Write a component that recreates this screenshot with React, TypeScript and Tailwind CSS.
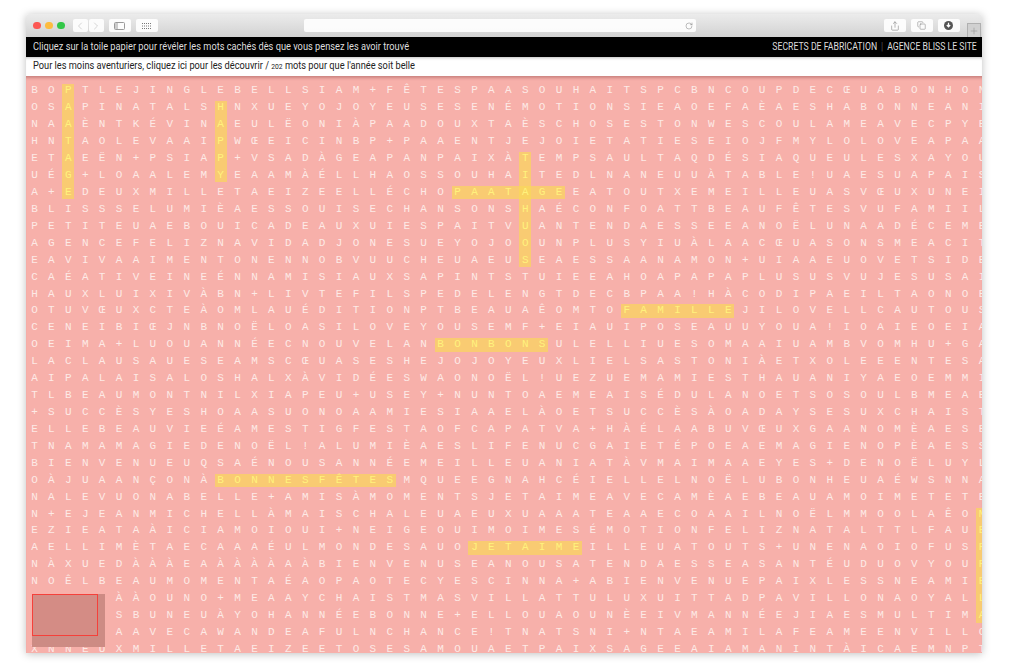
import { ChevronLeft, ChevronRight, Copy, Plus, RotateCw, Share } from "lucide-react";

const rows = [
  "BOPTLEJINGLEBELLSIAM+FÊTESPAASOUHAITSPCBNCOUPDECŒUABONHON",
  "OSAPINATALSHNXUEYOJOYEUSESENÉMOTIONSIEAOEFAÈAESHABONNEANI",
  "NAAÈNTKÉVINAEULËONIÀPAADOUXTAÈSCHOSESTONWESCOULAMEAVECPYE",
  "HNTAOLEVAAIPWŒEICINBP+PAAENTJEJOIETATIESEIOJFMYLOLOVEAPAA",
  "ETAEËN+PSIAP+VSADÀGEAPANPAIXÀTEMPSAULTAQDÉSIAQUEULESXAYOU",
  "UÉG+LOAALEMYEAAMÀÉLLHAOSSOUHAITEDLNANEUUÀTABLE!UAESUAPAIS",
  "A+EDEUXMILLETAEIZEELLÉCHOPAATAGEEATOUTXEMEILLEUASVŒUXUNEI",
  "BLISSSELUMIÈAESSOUISECHANSONSHAÉCONFOATTBEAUFÊTESVUFAMIIL",
  "PETITEUAEBOUICADEAUXUIESPAITVUANTENDAESSEEANOËLUNAADÉCEMB",
  "AGENCEFELIZNAVIDADJONESUEYOJOOUNPLUSYIUÀLAACŒUASONSMEACIT",
  "EAVIVAAIMENTONENNOBVUUCHEUAEUSEAESSAANAMON+UIAAEUOVETSIDE",
  "CAÉATIVEINEÉNNAMISIAUXSAPINTSTUIEEAHOAPAPAPLUSUSVUJESUSAI",
  "HAUXLUIXIVÀBN+LIVTEFILSPEDELENGTDECBPAA!HÀCODIPAEILTAONOE",
  "OTUVŒUXCTEÀOMLAUÉDITIONPTBEAUAÊOMTOFAMILLEJILOVELLCAUTOUS",
  "CENEIBIŒJNBNOËLOASILOVEYOUSEMF+EIAUIPOSEAUUYOUA!IOAIEOEIA",
  "OEIMA+LUOUANNÉECNOUVELANBONBONSULELLIUESOMAAIUAMBVOMHU+GA",
  "LACLAUSAUESEAMSCŒUASESHEJOJOYEUXLIELSASTONIÀETXOLEEENTESA",
  "AIPALAISALOSHALXÀVIDÉESWAONOËL!UEZUEMAMIESTHAUANIYAEOEMMI",
  "TLBEAUMONTNILXIAPEU+USEY+NUNTOAEMEAISÉDULANOETSOSOULBMEAE",
  "+SUCCÈSYESHOAASUONOAAMIESIAAELÀOETSUCCÈSÀOADAYSESUXCHAIST",
  "ELLEBEAUVIEÉAMESTIGFESTAOFCAPATVA+HÀÉLAABUVŒUXGAANOMÈAESE",
  "TNAMAMAGIEDENOËL!ALUMIÈAESLIFENUCGAIETÉPOEAEMAGIENOPÈAESS",
  "BIENVENUEUQSAÉNOUSANNÉEMEILLEUANIATÀVMAIMAAEYES+DENOËLUYL",
  "OÀJUAANÇONÀBONNESFÊTESMQUEEGNAHCÉIELLELNOËLUBONHEUAÉWSNNA",
  "NALEVUONABELLE+AMISÀMOMENTSJETAIMEAVECAMÈAEBEAUAMOIMETETE",
  "N+EJEANMICHELLÀMAISCHALEUAEUXUAAATEAAECOAAILNOËLMMOOLAÊOM",
  "EZIEATAÀICIAMOIOUI+NEIGEOUIMOIMESÉMOTIONFELIZNATALTTLFAUE",
  "AELLIMÈTAECAAAÉULMONDESAUOJETAIMEILLEUATOUTS+UNENAOIOFUSR",
  "NÀXUEDÀÀÀEAÀÀÀÀAÀBIENVENUSEANOUSATENDAESSEASANTÉUDUOVYOUR",
  "NOÊLBEAUMOMENTAÉAOPAOTECYESCINNA+ABIENVENUEPAIXLESSNEAMIE",
  "     ÀÀOUNO+MEAAYCHAISTMASVILLATTULUXUITTADPAVILLONAOYALL",
  "     SBUNEUÀYOHANNÉEBONNE+ELLOUAOUNÈEIVMANNÉEJIAESMULTIMA",
  "     AAVECAWANDEAFULNCHANCE!TNATSNI+NTAEAMILAFEAMEENVILLO",
  "XNNEUXMILLETAEIZEETOSESAMOUAETPAIXSAGEEAIAMANINTÀICAEMNPT",
];

const PITCH = 16.93;

// found words: [col, row, length, vertical]
const words: [number, number, number, boolean][] = [
  [2, 0, 7, true],
  [11, 1, 5, true],
  [29, 4, 7, true],
  [25, 6, 7, false],
  [35, 13, 7, false],
  [24, 15, 7, false],
  [11, 23, 11, false],
  [26, 27, 7, false],
  [56, 25, 7, true],
];

const found = new Set<string>();
words.forEach(([col, row, len, vertical]) => {
  for (let i = 0; i < len; i++) {
    found.add(vertical ? `${row + i}-${col}` : `${row}-${col + i}`);
  }
});

function ToolButton({ className, children }: { className: string; children?: React.ReactNode }) {
  return (
    <div className={`flex h-[13px] items-center justify-center rounded-[2px] bg-white/90 text-[#777] ${className}`}>
      {children}
    </div>
  );
}

function Toolbar() {
  return (
    <div className="relative flex h-[23px] shrink-0 items-center bg-gradient-to-b from-[#ececec] to-[#d2d2d2] pl-[7px] pr-[22px]">
      <div className="flex gap-[4.5px]">
        <span className="h-[7.5px] w-[7.5px] rounded-full bg-[#fc5753]" />
        <span className="h-[7.5px] w-[7.5px] rounded-full bg-[#fdbc40]" />
        <span className="h-[7.5px] w-[7.5px] rounded-full bg-[#33c748]" />
      </div>
      <div className="ml-[8px] flex gap-px">
        <ToolButton className="w-[15px] text-[#bbb]">
          <ChevronLeft size={12} strokeWidth={1.2} />
        </ToolButton>
        <ToolButton className="w-[15px] text-[#bbb]">
          <ChevronRight size={12} strokeWidth={1.2} />
        </ToolButton>
      </div>
      <ToolButton className="ml-[5px] w-[22px]">
        <svg width="11" height="8" viewBox="0 0 11 8" fill="none">
          <rect x="0.5" y="0.5" width="10" height="7" rx="1" stroke="#999" />
          <rect x="1" y="1" width="3" height="6" fill="#ccc" />
        </svg>
      </ToolButton>
      <ToolButton className="ml-[5px] w-[22px]">
        <svg width="9" height="6" viewBox="0 0 9 6" fill="#777">
          <rect x="0" y="0" width="1" height="1" />
          <rect x="2" y="0" width="1" height="1" />
          <rect x="4" y="0" width="1" height="1" />
          <rect x="6" y="0" width="1" height="1" />
          <rect x="8" y="0" width="1" height="1" />
          <rect x="0" y="2.5" width="1" height="1" />
          <rect x="2" y="2.5" width="1" height="1" />
          <rect x="4" y="2.5" width="1" height="1" />
          <rect x="6" y="2.5" width="1" height="1" />
          <rect x="8" y="2.5" width="1" height="1" />
          <rect x="0" y="5" width="1" height="1" />
          <rect x="2" y="5" width="1" height="1" />
          <rect x="4" y="5" width="1" height="1" />
          <rect x="6" y="5" width="1" height="1" />
          <rect x="8" y="5" width="1" height="1" />
        </svg>
      </ToolButton>
      <ToolButton className="ml-[146px] w-[392px] justify-end pr-[3px]">
        <RotateCw size={8} strokeWidth={1.4} />
      </ToolButton>
      <ToolButton className="ml-[188px] w-[22px]">
        <Share size={10} strokeWidth={1.3} />
      </ToolButton>
      <ToolButton className="ml-[5px] w-[22px]">
        <Copy size={9} strokeWidth={1.3} />
      </ToolButton>
      <ToolButton className="ml-[5px] w-[22px]">
        <svg width="9" height="9" viewBox="0 0 9 9">
          <circle cx="4.5" cy="4.5" r="4.5" fill="#555" />
          <path d="M4.5 1.8v3.4M2.8 4l1.7 1.9L6.2 4" stroke="#fff" strokeWidth="1.2" fill="none" />
        </svg>
      </ToolButton>
      <div className="absolute bottom-0 right-px flex h-[14px] w-[14px] items-center justify-center border border-b-0 border-[#b0b0b0] bg-[#d0d0d0] text-[#8a8a8a]">
        <Plus size={10} strokeWidth={1.2} />
      </div>
    </div>
  );
}

function WordGrid() {
  return (
    <div className="relative flex-1 overflow-hidden bg-[#f7b0aa] shadow-[inset_0_4px_3px_-2px_rgba(120,50,50,0.35)]">
      {words.map(([col, row, len, vertical]) => {
        const left = col * PITCH + 2.3;
        const top = row * PITCH + 8.3;
        return (
          <div
            key={`${col}-${row}`}
            className="absolute bg-[#fad75a]/70"
            style={{
              left,
              top,
              width: vertical ? 12 : (len - 1) * PITCH + 12,
              height: vertical ? (len - 1) * PITCH + 13.4 : 13.4,
            }}
          />
        );
      })}

      <div className="relative grid grid-cols-[repeat(57,16.93px)] auto-rows-[16.93px] pt-[6.5px] font-['Liberation_Mono',monospace] text-[11px] leading-none text-[#fdeae6]">
        {rows.flatMap((row, r) =>
          Array.from(row).map((ch, c) => (
            <span
              key={`${r}-${c}`}
              className={found.has(`${r}-${c}`) ? "flex items-center justify-center text-[#fff27d]" : "flex items-center justify-center"}
            >
              {ch}
            </span>
          ))
        )}
      </div>

      {/* minimap */}
      <div className="absolute left-[6px] top-[518px] h-[53px] w-[73px] bg-[#cd8b84]">
        <div className="h-[42px] w-[66px] border border-[#f5403a] bg-[#d48c85]" />
      </div>
    </div>
  );
}

export default function App() {
  return (
    <div className="h-[672px] w-[1009px] overflow-hidden bg-white pl-[26px] pt-[14px]">
      <div className="flex h-[639px] w-[956px] flex-col overflow-hidden rounded-t-[3px] shadow-[0_1px_8px_rgba(0,0,0,0.25)]">
        <Toolbar />
        <div className="flex h-[19.5px] shrink-0 items-center justify-between bg-black pl-[7px] pr-[5px] font-['Roboto',sans-serif] text-[11px] text-[#ddd]">
          <span className="origin-left scale-x-[0.84] whitespace-nowrap">
            Cliquez sur la toile papier pour révéler les mots cachés dès que vous pensez les avoir trouvé
          </span>
          <span className="flex origin-right scale-x-[0.79] items-center whitespace-nowrap">
            SECRETS DE FABRICATION
            <span className="mx-[5px] text-[#555]">|</span>
            AGENCE BLISS LE SITE
          </span>
        </div>
        <div className="flex h-[19.5px] shrink-0 items-center bg-white pl-[7px] font-['Roboto',sans-serif] text-[11px] text-[#222] shadow-[inset_0_3px_3px_-2px_rgba(0,0,0,0.25)]">
          <span className="origin-left scale-x-[0.84] whitespace-nowrap">
            Pour les moins aventuriers, cliquez ici pour les découvrir / <span className="text-[8px]">202</span> mots
            pour que l'année soit belle
          </span>
        </div>
        <WordGrid />
      </div>
    </div>
  );
}
